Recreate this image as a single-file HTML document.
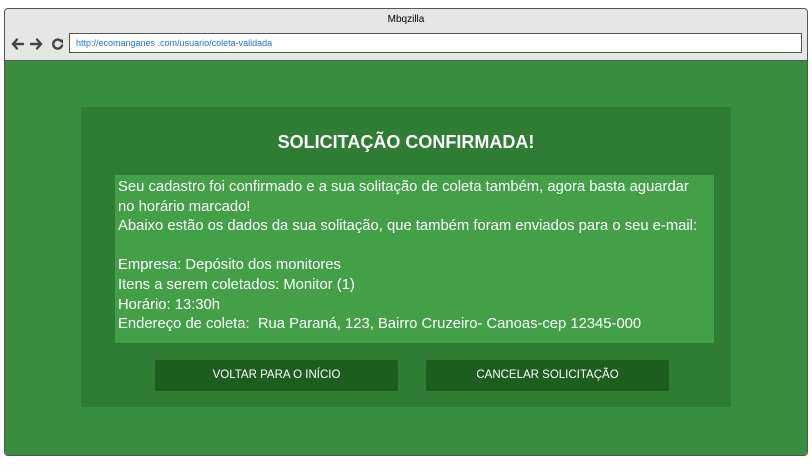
<!DOCTYPE html>
<html><head><meta charset="utf-8"><style>
*{margin:0;padding:0;box-sizing:border-box}
body{width:812px;height:472px;background:#fff;font-family:"Liberation Sans",sans-serif;position:relative;overflow:hidden}
.win{position:absolute;left:4px;top:8px;width:804px;height:448px;border:1px solid #555;border-radius:4px;background:#e6e6e6;overflow:hidden}
.title{position:absolute;top:5px;width:100%;text-align:center;font-size:10px;color:#000}
.url{position:absolute;left:64px;top:24px;width:733px;height:20px;background:#fff;border:1px solid #555;font-size:9px;color:#1a73e8;padding:4px 6px}
.content{position:absolute;left:0;top:51px;width:802px;height:396px;background:#388e3c;border-top:1px solid #555}
.card{position:absolute;left:76px;top:46px;width:650px;height:300px;background:#2e7d32}
h1{position:absolute;top:25px;width:100%;text-align:center;color:#fff;font-size:18px;font-weight:bold}
.box{position:absolute;left:34px;top:68px;width:599px;height:168px;background:#43a047;color:#fff;font-size:14.8px;line-height:19.6px;padding:3px 3px;white-space:nowrap}
.btn{position:absolute;top:253px;width:243px;height:31px;background:#1b5e20;color:#fff;font-size:11.5px;text-align:center;line-height:31px;border-radius:2px}
</style></head><body>
<div class="win">
<div class="title">Mbqzilla</div>
<svg style="position:absolute;left:6px;top:27px" width="56" height="16" viewBox="0 0 56 16">
<g stroke="#444" stroke-width="2.4" fill="none" stroke-linecap="round">
<path d="M12 8H2M6 3.5L2 8l4 4.5"/>
<path d="M20 8h10M26 3.5L30 8l-4 4.5"/>
<path d="M50 5A4.5 4.5 0 1 0 51 9.5"/>
</g><path d="M47.5 3.5h4.5v4.5z" fill="#444"/></svg>
<div class="url">http://ecomanganes .com/usuario/coleta-validada</div>
<div class="content">
<div class="card">
<h1>SOLICITAÇÃO CONFIRMADA!</h1>
<div class="box">Seu cadastro foi confirmado e a sua solitação de coleta também, agora basta aguardar<br>no horário marcado!<br>Abaixo estão os dados da sua solitação, que também foram enviados para o seu e-mail:<br><br>Empresa: Depósito dos monitores<br>Itens a serem coletados: Monitor (1)<br>Horário: 13:30h<br>Endereço de coleta:&nbsp; Rua Paraná, 123, Bairro Cruzeiro- Canoas-cep 12345-000</div>
<div class="btn" style="left:74px">VOLTAR PARA O INÍCIO</div>
<div class="btn" style="left:345px">CANCELAR SOLICITAÇÃO</div>
</div></div></div>
</body></html>
